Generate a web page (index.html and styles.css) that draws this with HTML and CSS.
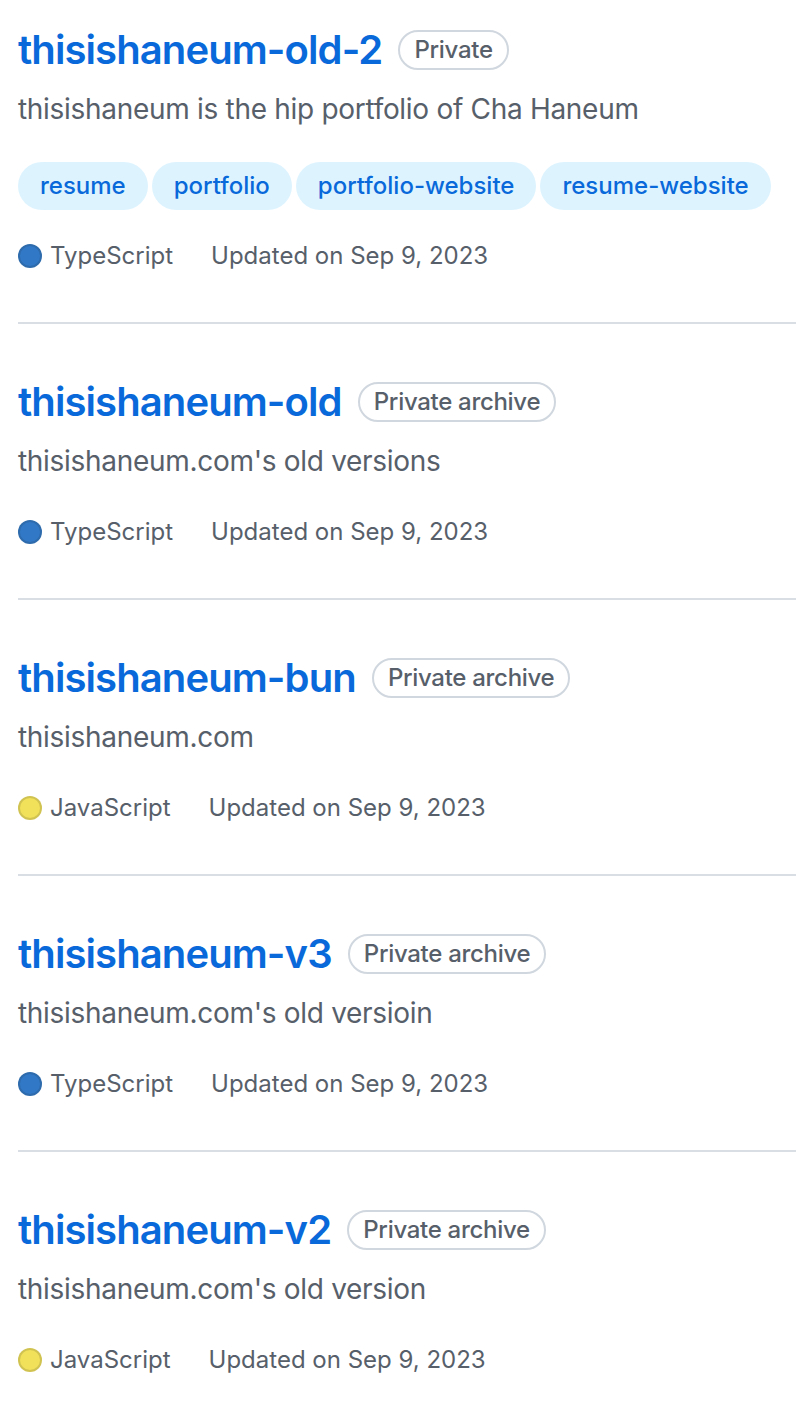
FILE: index.html
```html
<!DOCTYPE html>
<html lang="en">
<head>
<meta charset="utf-8">
<title>Repositories</title>
<link rel="stylesheet" href="styles.css">
</head>
<body>
<ul class="repo-list">
  <li class="repo">
    <h3 class="repo-title"><a class="repo-name" href="#">thisishaneum-old-2</a> <span class="label">Private</span></h3>
    <p class="repo-desc">thisishaneum is the hip portfolio of Cha Haneum</p>
    <div class="topics">
      <a class="topic" href="#">resume</a>
      <a class="topic" href="#">portfolio</a>
      <a class="topic" href="#">portfolio-website</a>
      <a class="topic" href="#">resume-website</a>
    </div>
    <div class="meta">
      <span class="lang"><span class="lang-dot ts"></span>TypeScript</span>
      <span class="updated">Updated on Sep 9, 2023</span>
    </div>
  </li>
  <li class="repo">
    <h3 class="repo-title"><a class="repo-name" href="#">thisishaneum-old</a> <span class="label">Private archive</span></h3>
    <p class="repo-desc">thisishaneum.com's old versions</p>
    <div class="meta">
      <span class="lang"><span class="lang-dot ts"></span>TypeScript</span>
      <span class="updated">Updated on Sep 9, 2023</span>
    </div>
  </li>
  <li class="repo">
    <h3 class="repo-title"><a class="repo-name" href="#">thisishaneum-bun</a> <span class="label">Private archive</span></h3>
    <p class="repo-desc">thisishaneum.com</p>
    <div class="meta">
      <span class="lang"><span class="lang-dot js"></span>JavaScript</span>
      <span class="updated">Updated on Sep 9, 2023</span>
    </div>
  </li>
  <li class="repo">
    <h3 class="repo-title"><a class="repo-name" href="#">thisishaneum-v3</a> <span class="label">Private archive</span></h3>
    <p class="repo-desc">thisishaneum.com's old versioin</p>
    <div class="meta">
      <span class="lang"><span class="lang-dot ts"></span>TypeScript</span>
      <span class="updated">Updated on Sep 9, 2023</span>
    </div>
  </li>
  <li class="repo">
    <h3 class="repo-title"><a class="repo-name" href="#">thisishaneum-v2</a> <span class="label">Private archive</span></h3>
    <p class="repo-desc">thisishaneum.com's old version</p>
    <div class="meta">
      <span class="lang"><span class="lang-dot js"></span>JavaScript</span>
      <span class="updated">Updated on Sep 9, 2023</span>
    </div>
  </li>
</ul>
</body>
</html>
```
FILE: styles.css
```css
* { box-sizing: border-box; }
html, body {
  margin: 0;
  padding: 0;
  background: #ffffff;
}
body {
  font-family: Inter, "Noto Sans", "Liberation Sans", sans-serif;
  color: #57606a;
}
.repo-list {
  list-style: none;
  margin: 0;
  padding: 0 0 0 18px;
}
.repo {
  display: flex;
  flex-direction: column;
  align-items: flex-start;
  padding: 48px 0;
  border-bottom: 2px solid #d8dee4;
}
.repo:first-child {
  padding-top: 20px;
}
.repo-title {
  margin: 0 0 8px;
  font-size: 40px;
  line-height: 60px;
  font-weight: 600;
}
.repo-name {
  color: #0969da;
  text-decoration: none;
  letter-spacing: -0.9px;
}
.label {
  display: inline-block;
  vertical-align: middle;
  margin-left: 6px;
  margin-bottom: 6px;
  padding: 0 14px;
  font-size: 24px;
  font-weight: 500;
  line-height: 36px;
  letter-spacing: -0.3px;
  color: #57606a;
  border: 2px solid #d0d7de;
  border-radius: 2em;
}
.repo-desc {
  margin: 0 0 16px;
  font-size: 28px;
  line-height: 42px;
  letter-spacing: -0.3px;
  color: #57606a;
}
.topics {
  display: flex;
  flex-wrap: wrap;
  gap: 4px;
  margin: 16px 0 28px;
}
.topic {
  display: inline-block;
  padding: 0 20px;
  font-size: 24px;
  font-weight: 500;
  line-height: 44px;
  color: #0969da;
  background: #ddf4ff;
  border: 2px solid transparent;
  border-radius: 2em;
  text-decoration: none;
}
.meta {
  display: flex;
  margin-top: 16px;
  font-size: 24px;
  line-height: 36px;
  color: #57606a;
}
.topics + .meta { margin-top: 0; }
.lang {
  display: inline-flex;
  align-items: center;
  gap: 8px;
  margin-right: 38px;
}
.lang-dot {
  display: inline-block;
  width: 24px;
  height: 24px;
  border-radius: 50%;
  border: 2px solid rgba(27, 31, 36, 0.15);
}
.lang-dot.ts { background: #3178c6; }
.lang-dot.js { background: #f1e05a; }
```
